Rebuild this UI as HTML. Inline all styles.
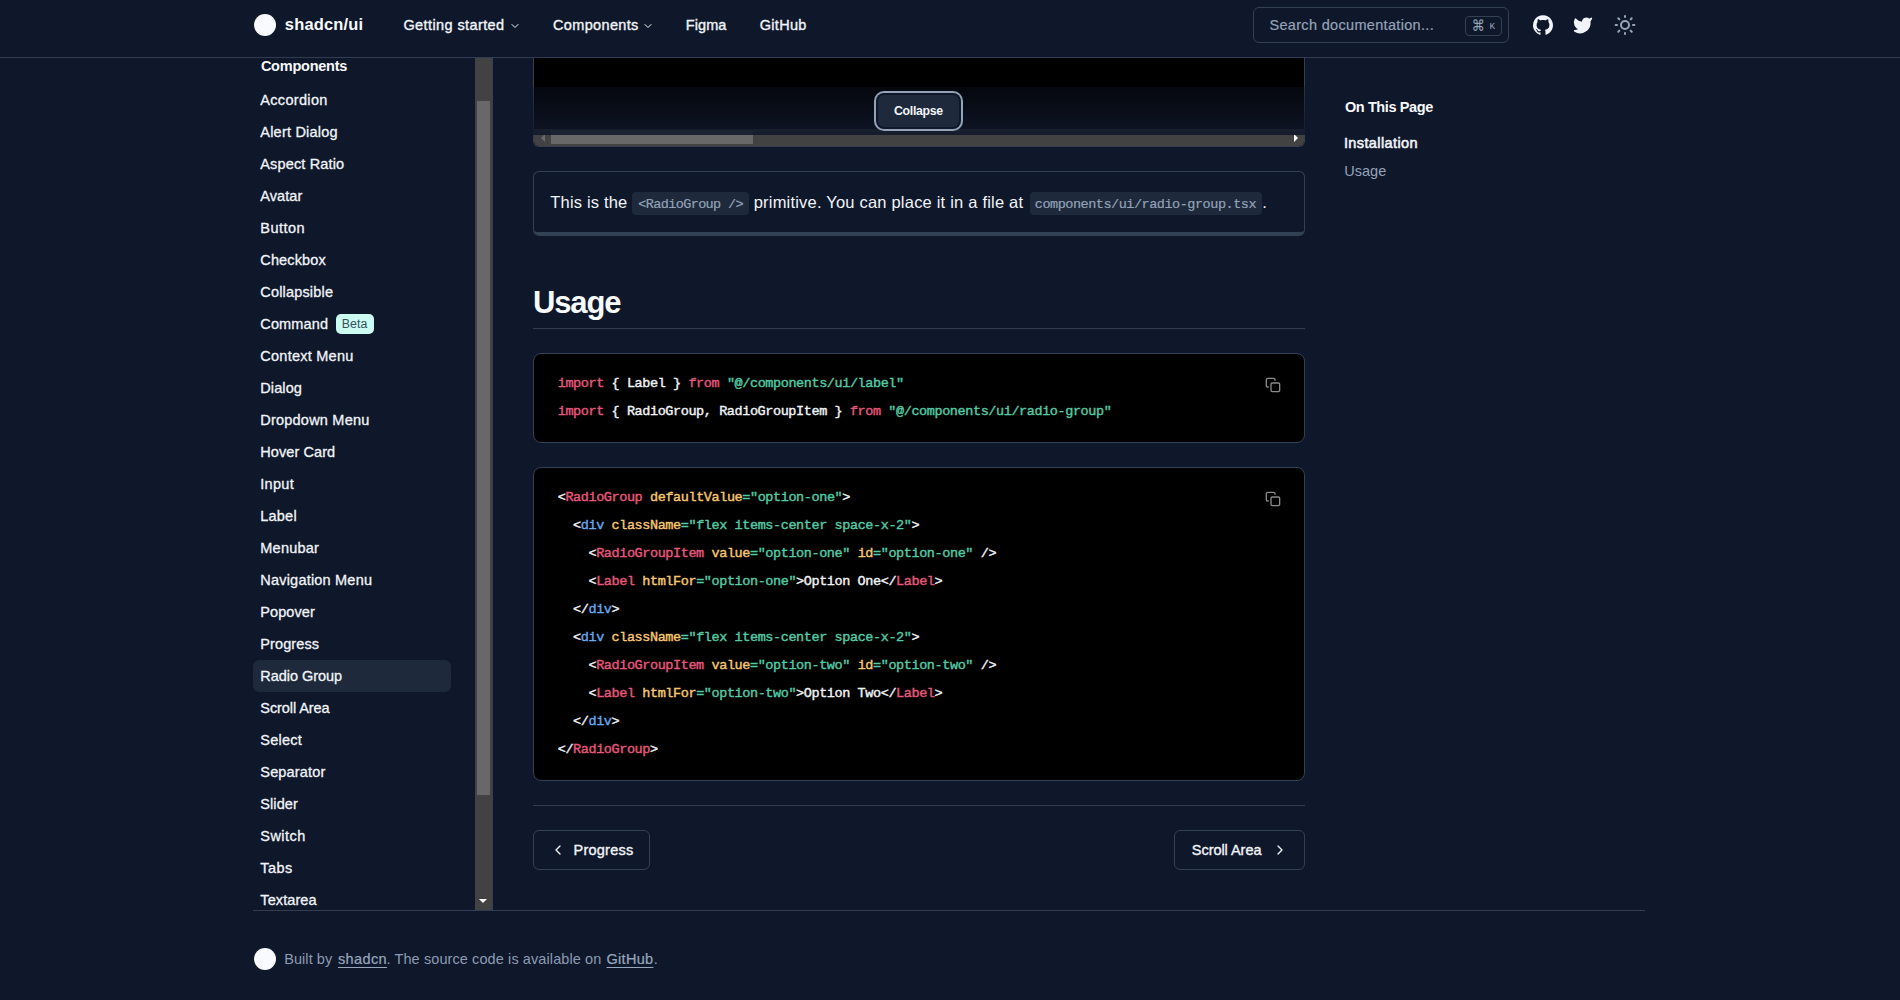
<!DOCTYPE html>
<html lang="en">
<head>
<meta charset="utf-8">
<title>Radio Group - shadcn/ui</title>
<style>
*{box-sizing:border-box;margin:0;padding:0}
html,body{width:1900px;height:1000px;overflow:hidden;background:#0f172a;}
body{position:relative;font-family:"Liberation Sans",sans-serif;color:#f1f5f9;-webkit-font-smoothing:antialiased}
a{color:inherit;text-decoration:none}
code,kbd{font:inherit;letter-spacing:inherit}
ul{list-style:none}
.t{position:absolute;white-space:nowrap;display:block}
.abs{position:absolute}
header.site{position:absolute;left:0;top:0;width:1900px;height:58px;background:#0f172a;border-bottom:1px solid #323b52;z-index:5}
.logo{position:absolute;border-radius:50%;background:#f8fafc}
.search{position:absolute;left:1253px;top:7px;width:256px;height:36px;border:1px solid #334155;border-radius:6px}
.kbd{position:absolute;left:211px;top:8px;width:37px;height:20px;border:1px solid #334155;border-radius:4px;background:#0f172a}
aside.side{position:absolute;left:253px;top:58px;width:240px;height:852px;border-right:1px solid #334155;overflow:hidden}
.navsel{position:absolute;left:0;top:602px;width:198px;height:32px;border-radius:6px;background:#1e293b}
.badge{position:absolute;left:83px;top:256px;width:38px;height:20px;border-radius:5px;background:#ccfbf1}
.vsb{position:absolute;left:222px;top:0;width:17px;height:852px;background:#424242}
.vsb i{position:absolute;left:2px;top:43px;width:13px;height:694px;background:#686868}
.vsb b{position:absolute;left:4px;top:840.5px;width:0;height:0;border-left:4px solid transparent;border-right:4px solid transparent;border-top:4px solid #fff}
main{position:absolute;left:0;top:0}
.code{position:absolute;left:533px;width:772px;background:#000;border:1px solid #334155;border-radius:8px;overflow:hidden}
pre{position:absolute;left:23.7px;font:400 13.5px/28px "Liberation Mono",monospace;letter-spacing:-0.412px;color:#f1f5f9;white-space:pre;-webkit-text-stroke:0.4px}
.k{color:#e6587c}.s{color:#52cca6}.d{color:#63a9ef}.a{color:#f8c870}.p{color:#f1f5f9}.c{color:#e8587c}
.hr{position:absolute;left:533px;width:772px;height:1px;background:#333c53}
.callout{position:absolute;left:533px;top:171px;width:772px;height:65px;border:1px solid #334155;border-bottom-width:4px;border-radius:6px}
.chip{position:absolute;top:20px;height:23px;border-radius:4px;background:#1e293b}
.pbtn{position:absolute;top:830px;height:40px;border:1px solid #334155;border-radius:6px}
footer{position:absolute;left:253px;top:910px;width:1392px;height:90px;border-top:1px solid #333c53}
svg{position:absolute;overflow:visible}
</style>
</head>
<body>

<header class="site">
<a class="logo" style="left:254px;top:14px;width:22px;height:22px"></a>
<a class="t"  style="left:284.80px;top:14.20px;font:700 16.5px/20px 'Liberation Sans', sans-serif;letter-spacing:0.171px;color:#f8fafc;">shadcn/ui</a>
<nav>
<a class="t"  style="left:403.40px;top:15.00px;font:400 14.5px/20px 'Liberation Sans', sans-serif;letter-spacing:0.404px;color:#f1f5f9;-webkit-text-stroke:0.35px #f1f5f9;">Getting started</a>
<svg style="left:509px;top:20px" width="12" height="12" viewBox="0 0 24 24" fill="none" stroke="#f1f5f9" stroke-width="2" stroke-linecap="round" stroke-linejoin="round"><path d="m6 9 6 6 6-6"/></svg>
<a class="t"  style="left:553.00px;top:15.00px;font:400 14.5px/20px 'Liberation Sans', sans-serif;letter-spacing:0.348px;color:#f1f5f9;-webkit-text-stroke:0.35px #f1f5f9;">Components</a>
<svg style="left:642px;top:20px" width="12" height="12" viewBox="0 0 24 24" fill="none" stroke="#f1f5f9" stroke-width="2" stroke-linecap="round" stroke-linejoin="round"><path d="m6 9 6 6 6-6"/></svg>
<a class="t"  style="left:685.80px;top:15.00px;font:400 14.5px/20px 'Liberation Sans', sans-serif;letter-spacing:0.070px;color:#f1f5f9;-webkit-text-stroke:0.35px #f1f5f9;">Figma</a>
<a class="t"  style="left:759.80px;top:15.00px;font:400 14.5px/20px 'Liberation Sans', sans-serif;letter-spacing:0.287px;color:#f1f5f9;-webkit-text-stroke:0.35px #f1f5f9;">GitHub</a>
</nav>
<div class="search">
<span class="t"  style="left:15.40px;top:7.00px;font:400 14.5px/20px 'Liberation Sans', sans-serif;letter-spacing:0.325px;color:#94a3b8;-webkit-text-stroke:0.2px #94a3b8;">Search documentation...</span>
<span class="kbd">
<kbd class="t"  style="left:5.80px;top:0.00px;font:400 13px/20px 'DejaVu Sans', sans-serif;letter-spacing:0.000px;color:#94a3b8;transform:scaleY(1.2);transform-origin:50% 78%;">⌘</kbd>
<kbd class="t"  style="left:23.60px;top:-0.30px;font:400 9.3px/20px 'Liberation Mono', monospace;letter-spacing:0.000px;color:#94a3b8;">K</kbd>
</span>
</div>
<svg style="left:1533px;top:15px" width="20" height="20" viewBox="0 0 438.549 438.549"><path fill="#f1f5f9" d="M409.132 114.573c-19.608-33.596-46.205-60.194-79.798-79.8-33.598-19.607-70.277-29.408-110.063-29.408-39.781 0-76.472 9.804-110.063 29.408-33.596 19.605-60.192 46.204-79.8 79.8C9.803 148.168 0 184.854 0 224.63c0 47.78 13.94 90.745 41.827 128.906 27.884 38.164 63.906 64.572 108.063 79.227 5.14.954 8.945.283 11.419-1.996 2.475-2.282 3.711-5.14 3.711-8.562 0-.571-.049-5.708-.144-15.417a2549.81 2549.81 0 01-.144-25.406l-6.567 1.136c-4.187.767-9.469 1.092-15.846 1-6.374-.089-12.991-.757-19.842-1.999-6.854-1.231-13.229-4.086-19.13-8.559-5.898-4.473-10.085-10.328-12.56-17.556l-2.855-6.57c-1.903-4.374-4.899-9.233-8.992-14.559-4.093-5.331-8.232-8.945-12.419-10.848l-1.999-1.431c-1.332-.951-2.568-2.098-3.711-3.429-1.142-1.331-1.997-2.663-2.568-3.997-.572-1.335-.098-2.43 1.427-3.289 1.525-.859 4.281-1.276 8.28-1.276l5.708.853c3.807.763 8.516 3.042 14.133 6.851 5.614 3.806 10.229 8.754 13.846 14.842 4.38 7.806 9.657 13.754 15.846 17.847 6.184 4.093 12.419 6.136 18.699 6.136 6.28 0 11.704-.476 16.274-1.423 4.565-.952 8.848-2.383 12.847-4.285 1.713-12.758 6.377-22.559 13.988-29.41-10.848-1.14-20.601-2.857-29.264-5.14-8.658-2.286-17.605-5.996-26.835-11.14-9.235-5.137-16.896-11.516-22.985-19.126-6.09-7.614-11.088-17.61-14.987-29.979-3.901-12.374-5.852-26.648-5.852-42.826 0-23.035 7.52-42.637 22.557-58.817-7.044-17.318-6.379-36.732 1.997-58.24 5.52-1.715 13.706-.428 24.554 3.853 10.85 4.283 18.794 7.952 23.84 10.994 5.046 3.041 9.089 5.618 12.135 7.708 17.705-4.947 35.976-7.421 54.818-7.421s37.117 2.474 54.823 7.421l10.849-6.849c7.419-4.57 16.18-8.758 26.262-12.565 10.088-3.805 17.802-4.853 23.134-3.138 8.562 21.509 9.325 40.922 2.279 58.24 15.036 16.18 22.559 35.787 22.559 58.817 0 16.178-1.958 30.497-5.853 42.966-3.9 12.471-8.941 22.457-15.125 29.979-6.191 7.521-13.901 13.85-23.131 18.986-9.232 5.14-18.182 8.85-26.84 11.136-8.662 2.286-18.415 4.004-29.263 5.146 9.894 8.562 14.842 22.077 14.842 40.539v60.237c0 3.422 1.19 6.279 3.572 8.562 2.379 2.279 6.136 2.95 11.276 1.995 44.163-14.653 80.185-41.062 108.068-79.226 27.88-38.161 41.825-81.126 41.825-128.906-.01-39.771-9.818-76.454-29.414-110.049z"/></svg>
<svg style="left:1573px;top:15px" width="20" height="20" viewBox="0 0 24 24" fill="#f1f5f9" stroke="#f1f5f9" stroke-width="2" stroke-linecap="round" stroke-linejoin="round"><path d="M22 4s-.7 2.1-2 3.4c1.6 10-9.4 17.3-18 11.6 2.2.1 4.4-.6 6-2C3 15.5.5 9.6 3 5c2.2 2.6 5.6 4.1 9 4-.9-4.2 4-6.6 7-3.8 1.1 0 3-1.2 3-1.2z"/></svg>
<svg style="left:1613px;top:13px" width="24" height="24" viewBox="0 0 24 24" fill="none" stroke="#9aa7bb" stroke-width="2" stroke-linecap="round" stroke-linejoin="round"><circle cx="12" cy="12" r="4"/><path d="M12 2.9v1.1"/><path d="M12 20v1.1"/><path d="m5.3 5.3 1.04 1.04"/><path d="m17.66 17.66 1.04 1.04"/><path d="M2.6 12h1.4"/><path d="M20 12h1.4"/><path d="m6.34 17.66-1.04 1.04"/><path d="m18.7 5.3-1.04 1.04"/></svg>
</header>
<aside class="side">
<nav class="sidenav">
<div class="navsel"></div>
<h4 class="t"  style="left:7.90px;top:-1.80px;font:700 14.5px/20px 'Liberation Sans', sans-serif;letter-spacing:-0.238px;color:#f8fafc;">Components</h4>
<ul>
<li><a class="t"  style="left:7.30px;top:32.00px;font:400 14.5px/20px 'Liberation Sans', sans-serif;letter-spacing:0.323px;color:#f1f5f9;-webkit-text-stroke:0.3px #f1f5f9;">Accordion</a></li>
<li><a class="t"  style="left:7.30px;top:64.00px;font:400 14.5px/20px 'Liberation Sans', sans-serif;letter-spacing:0.210px;color:#f1f5f9;-webkit-text-stroke:0.3px #f1f5f9;">Alert Dialog</a></li>
<li><a class="t"  style="left:7.30px;top:96.00px;font:400 14.5px/20px 'Liberation Sans', sans-serif;letter-spacing:0.142px;color:#f1f5f9;-webkit-text-stroke:0.3px #f1f5f9;">Aspect Ratio</a></li>
<li><a class="t"  style="left:7.30px;top:128.00px;font:400 14.5px/20px 'Liberation Sans', sans-serif;letter-spacing:0.077px;color:#f1f5f9;-webkit-text-stroke:0.3px #f1f5f9;">Avatar</a></li>
<li><a class="t"  style="left:7.30px;top:160.00px;font:400 14.5px/20px 'Liberation Sans', sans-serif;letter-spacing:0.449px;color:#f1f5f9;-webkit-text-stroke:0.3px #f1f5f9;">Button</a></li>
<li><a class="t"  style="left:7.30px;top:192.00px;font:400 14.5px/20px 'Liberation Sans', sans-serif;letter-spacing:0.139px;color:#f1f5f9;-webkit-text-stroke:0.3px #f1f5f9;">Checkbox</a></li>
<li><a class="t"  style="left:7.30px;top:224.00px;font:400 14.5px/20px 'Liberation Sans', sans-serif;letter-spacing:0.174px;color:#f1f5f9;-webkit-text-stroke:0.3px #f1f5f9;">Collapsible</a></li>
<li><a class="t"  style="left:7.30px;top:256.00px;font:400 14.5px/20px 'Liberation Sans', sans-serif;letter-spacing:0.130px;color:#f1f5f9;-webkit-text-stroke:0.3px #f1f5f9;">Command</a><span class="badge"><span class="t"  style="left:5.80px;top:0.40px;font:400 12.3px/20px 'Liberation Sans', sans-serif;letter-spacing:0.114px;color:#33505a;">Beta</span></span></li>
<li><a class="t"  style="left:7.30px;top:288.00px;font:400 14.5px/20px 'Liberation Sans', sans-serif;letter-spacing:0.245px;color:#f1f5f9;-webkit-text-stroke:0.3px #f1f5f9;">Context Menu</a></li>
<li><a class="t"  style="left:7.30px;top:320.00px;font:400 14.5px/20px 'Liberation Sans', sans-serif;letter-spacing:0.091px;color:#f1f5f9;-webkit-text-stroke:0.3px #f1f5f9;">Dialog</a></li>
<li><a class="t"  style="left:7.30px;top:352.00px;font:400 14.5px/20px 'Liberation Sans', sans-serif;letter-spacing:0.214px;color:#f1f5f9;-webkit-text-stroke:0.3px #f1f5f9;">Dropdown Menu</a></li>
<li><a class="t"  style="left:7.30px;top:384.00px;font:400 14.5px/20px 'Liberation Sans', sans-serif;letter-spacing:0.081px;color:#f1f5f9;-webkit-text-stroke:0.3px #f1f5f9;">Hover Card</a></li>
<li><a class="t"  style="left:7.30px;top:416.00px;font:400 14.5px/20px 'Liberation Sans', sans-serif;letter-spacing:0.295px;color:#f1f5f9;-webkit-text-stroke:0.3px #f1f5f9;">Input</a></li>
<li><a class="t"  style="left:7.30px;top:448.00px;font:400 14.5px/20px 'Liberation Sans', sans-serif;letter-spacing:0.211px;color:#f1f5f9;-webkit-text-stroke:0.3px #f1f5f9;">Label</a></li>
<li><a class="t"  style="left:7.30px;top:480.00px;font:400 14.5px/20px 'Liberation Sans', sans-serif;letter-spacing:0.233px;color:#f1f5f9;-webkit-text-stroke:0.3px #f1f5f9;">Menubar</a></li>
<li><a class="t"  style="left:7.30px;top:512.00px;font:400 14.5px/20px 'Liberation Sans', sans-serif;letter-spacing:0.204px;color:#f1f5f9;-webkit-text-stroke:0.3px #f1f5f9;">Navigation Menu</a></li>
<li><a class="t"  style="left:7.30px;top:544.00px;font:400 14.5px/20px 'Liberation Sans', sans-serif;letter-spacing:0.087px;color:#f1f5f9;-webkit-text-stroke:0.3px #f1f5f9;">Popover</a></li>
<li><a class="t"  style="left:7.30px;top:576.00px;font:400 14.5px/20px 'Liberation Sans', sans-serif;letter-spacing:0.104px;color:#f1f5f9;-webkit-text-stroke:0.3px #f1f5f9;">Progress</a></li>
<li><a class="t"  style="left:7.30px;top:608.00px;font:400 14.5px/20px 'Liberation Sans', sans-serif;letter-spacing:-0.045px;color:#f1f5f9;-webkit-text-stroke:0.3px #f1f5f9;">Radio Group</a></li>
<li><a class="t"  style="left:7.30px;top:640.00px;font:400 14.5px/20px 'Liberation Sans', sans-serif;letter-spacing:-0.085px;color:#f1f5f9;-webkit-text-stroke:0.3px #f1f5f9;">Scroll Area</a></li>
<li><a class="t"  style="left:7.30px;top:672.00px;font:400 14.5px/20px 'Liberation Sans', sans-serif;letter-spacing:0.226px;color:#f1f5f9;-webkit-text-stroke:0.3px #f1f5f9;">Select</a></li>
<li><a class="t"  style="left:7.30px;top:704.00px;font:400 14.5px/20px 'Liberation Sans', sans-serif;letter-spacing:0.169px;color:#f1f5f9;-webkit-text-stroke:0.3px #f1f5f9;">Separator</a></li>
<li><a class="t"  style="left:7.30px;top:736.00px;font:400 14.5px/20px 'Liberation Sans', sans-serif;letter-spacing:0.091px;color:#f1f5f9;-webkit-text-stroke:0.3px #f1f5f9;">Slider</a></li>
<li><a class="t"  style="left:7.30px;top:768.00px;font:400 14.5px/20px 'Liberation Sans', sans-serif;letter-spacing:0.451px;color:#f1f5f9;-webkit-text-stroke:0.3px #f1f5f9;">Switch</a></li>
<li><a class="t"  style="left:7.30px;top:800.00px;font:400 14.5px/20px 'Liberation Sans', sans-serif;letter-spacing:0.407px;color:#f1f5f9;-webkit-text-stroke:0.3px #f1f5f9;">Tabs</a></li>
<li><a class="t"  style="left:7.30px;top:832.00px;font:400 14.5px/20px 'Liberation Sans', sans-serif;letter-spacing:0.093px;color:#f1f5f9;-webkit-text-stroke:0.3px #f1f5f9;">Textarea</a></li>
</ul>
</nav>
<div class="vsb"><i></i><b></b></div>
</aside>
<main>
<div class="abs" style="left:533px;top:58px;width:772px;height:89px;background:#000;border:1px solid #364055;border-top:0;border-radius:0 0 6px 6px;overflow:hidden">
<div class="abs" style="left:0;top:71px;width:770px;height:17px;background:#424242">
<i class="abs" style="left:17px;top:2px;width:202px;height:13px;background:#686868"></i>
<b class="abs" style="left:6.5px;top:4.5px;border-top:4px solid transparent;border-bottom:4px solid transparent;border-right:4px solid #6a6a6a"></b>
<b class="abs" style="left:759.5px;top:4.5px;border-top:4px solid transparent;border-bottom:4px solid transparent;border-left:4px solid #fff"></b>
</div>
</div>
<div class="abs" style="left:533px;top:87px;width:772px;height:48px;background:linear-gradient(to bottom,rgba(15,23,42,.3),rgba(15,23,42,.88))"></div>
<button class="abs" style="left:878px;top:95px;width:81px;height:32px;border:0;border-radius:6px;background:#1e293b;box-shadow:0 0 0 2px #0f172a,0 0 0 4px #94a3b8">
<span class="t"  style="left:16.00px;top:5.80px;font:700 12.3px/20px 'Liberation Sans', sans-serif;letter-spacing:-0.302px;color:#f1f5f9;">Collapse</span>
</button>
<div class="callout">
<span class="t"  style="left:16.30px;top:16.00px;font:400 16.5px/28px 'Liberation Sans', sans-serif;letter-spacing:0.178px;color:#f1f5f9;">This is the</span>
<code class="chip" style="left:98px;width:117px"><span class="t"  style="left:6.20px;top:3.00px;font:400 13.5px/20px 'Liberation Mono', monospace;letter-spacing:-0.609px;color:#94a3b8;-webkit-text-stroke:0.2px #94a3b8;">&lt;RadioGroup /&gt;</span></code>
<span class="t"  style="left:219.70px;top:16.00px;font:400 16.5px/28px 'Liberation Sans', sans-serif;letter-spacing:0.205px;color:#f1f5f9;">primitive. You can place it in a file at</span>
<code class="chip" style="left:495.5px;width:232px"><span class="t"  style="left:5.30px;top:3.00px;font:400 13.5px/20px 'Liberation Mono', monospace;letter-spacing:-0.473px;color:#94a3b8;-webkit-text-stroke:0.2px #94a3b8;">components/ui/radio-group.tsx</span></code>
<span class="t"  style="left:728.30px;top:16.00px;font:400 16.5px/28px 'Liberation Sans', sans-serif;letter-spacing:0.000px;color:#f1f5f9;">.</span>
</div>
<h2 class="t"  style="left:532.90px;top:285.00px;font:700 31px/36px 'Liberation Sans', sans-serif;letter-spacing:-1.101px;color:#f8fafc;">Usage</h2>
<div class="hr" style="top:328px"></div>
<div class="code" style="top:353px;height:90px">
<pre style="top:16px"><code><span class="k">import</span> { Label } <span class="k">from</span> <span class="s">"@/components/ui/label"</span>
<span class="k">import</span> { RadioGroup, RadioGroupItem } <span class="k">from</span> <span class="s">"@/components/ui/radio-group"</span></code></pre>
<svg style="left:731px;top:23px" width="16" height="16" viewBox="0 0 24 24" fill="none" stroke="#8b8b8b" stroke-width="2" stroke-linecap="round" stroke-linejoin="round"><rect x="9" y="9" width="13" height="13" rx="2" ry="2"/><path d="M5 15H4a2 2 0 0 1-2-2V4a2 2 0 0 1 2-2h9a2 2 0 0 1 2 2v1"/></svg>
</div>
<div class="code" style="top:467px;height:314px">
<pre style="top:16px"><code>&lt;<span class="c">RadioGroup</span> <span class="a">defaultValue</span><span class="s">=</span><span class="s">"option-one"</span>&gt;
  &lt;<span class="d">div</span> <span class="a">className</span><span class="s">=</span><span class="s">"flex items-center space-x-2"</span>&gt;
    &lt;<span class="c">RadioGroupItem</span> <span class="a">value</span><span class="s">=</span><span class="s">"option-one"</span> <span class="a">id</span><span class="s">=</span><span class="s">"option-one"</span> /&gt;
    &lt;<span class="c">Label</span> <span class="a">htmlFor</span><span class="s">=</span><span class="s">"option-one"</span>&gt;Option One&lt;/<span class="c">Label</span>&gt;
  &lt;/<span class="d">div</span>&gt;
  &lt;<span class="d">div</span> <span class="a">className</span><span class="s">=</span><span class="s">"flex items-center space-x-2"</span>&gt;
    &lt;<span class="c">RadioGroupItem</span> <span class="a">value</span><span class="s">=</span><span class="s">"option-two"</span> <span class="a">id</span><span class="s">=</span><span class="s">"option-two"</span> /&gt;
    &lt;<span class="c">Label</span> <span class="a">htmlFor</span><span class="s">=</span><span class="s">"option-two"</span>&gt;Option Two&lt;/<span class="c">Label</span>&gt;
  &lt;/<span class="d">div</span>&gt;
&lt;/<span class="c">RadioGroup</span>&gt;</code></pre>
<svg style="left:731px;top:23px" width="16" height="16" viewBox="0 0 24 24" fill="none" stroke="#8b8b8b" stroke-width="2" stroke-linecap="round" stroke-linejoin="round"><rect x="9" y="9" width="13" height="13" rx="2" ry="2"/><path d="M5 15H4a2 2 0 0 1-2-2V4a2 2 0 0 1 2-2h9a2 2 0 0 1 2 2v1"/></svg>
</div>
<div class="hr" style="top:805px"></div>
<a class="pbtn" style="left:533px;width:117px">
<svg style="left:16px;top:11px" width="16" height="16" viewBox="0 0 24 24" fill="none" stroke="#f1f5f9" stroke-width="2" stroke-linecap="round" stroke-linejoin="round"><path d="m15 18-6-6 6-6"/></svg>
<span class="t"  style="left:39.50px;top:9.00px;font:400 14.5px/20px 'Liberation Sans', sans-serif;letter-spacing:0.247px;color:#f1f5f9;-webkit-text-stroke:0.35px #f1f5f9;">Progress</span>
</a>
<a class="pbtn" style="left:1174px;width:131px">
<span class="t"  style="left:16.80px;top:9.00px;font:400 14.5px/20px 'Liberation Sans', sans-serif;letter-spacing:-0.045px;color:#f1f5f9;-webkit-text-stroke:0.35px #f1f5f9;">Scroll Area</span>
<svg style="left:97px;top:11px" width="16" height="16" viewBox="0 0 24 24" fill="none" stroke="#f1f5f9" stroke-width="2" stroke-linecap="round" stroke-linejoin="round"><path d="m9 18 6-6-6-6"/></svg>
</a>
</main>
<nav class="toc">
<p class="t"  style="left:1344.90px;top:97.20px;font:700 14.5px/20px 'Liberation Sans', sans-serif;letter-spacing:-0.390px;color:#f8fafc;">On This Page</p>
<a class="t"  style="left:1343.90px;top:132.80px;font:400 14.5px/20px 'Liberation Sans', sans-serif;letter-spacing:0.395px;color:#f1f5f9;-webkit-text-stroke:0.55px #f1f5f9;">Installation</a>
<a class="t"  style="left:1344.30px;top:161.00px;font:400 14.5px/20px 'Liberation Sans', sans-serif;letter-spacing:0.013px;color:#94a3b8;">Usage</a>
</nav>
<footer>
<span class="logo" style="left:1px;top:37px;width:22px;height:22px"></span>
<p>
<span class="t"  style="left:31.20px;top:38.00px;font:400 14.5px/20px 'Liberation Sans', sans-serif;letter-spacing:0.071px;color:#8c9bb3;">Built by</span>
<a class="t"  style="left:85.00px;top:38.00px;font:400 14.5px/20px 'Liberation Sans', sans-serif;letter-spacing:0.361px;color:#97a6bc;-webkit-text-stroke:0.22px #97a6bc;text-decoration:underline;text-underline-offset:3px;text-decoration-thickness:1px;">shadcn</a>
<span class="t"  style="left:133.50px;top:38.00px;font:400 14.5px/20px 'Liberation Sans', sans-serif;letter-spacing:0.096px;color:#8c9bb3;">. The source code is available on</span>
<a class="t"  style="left:353.50px;top:38.00px;font:400 14.5px/20px 'Liberation Sans', sans-serif;letter-spacing:0.287px;color:#97a6bc;-webkit-text-stroke:0.22px #97a6bc;text-decoration:underline;text-underline-offset:3px;text-decoration-thickness:1px;">GitHub</a>
<span class="t"  style="left:400.80px;top:38.00px;font:400 14.5px/20px 'Liberation Sans', sans-serif;letter-spacing:0.000px;color:#8c9bb3;">.</span>
</p>
</footer>
</body></html>
